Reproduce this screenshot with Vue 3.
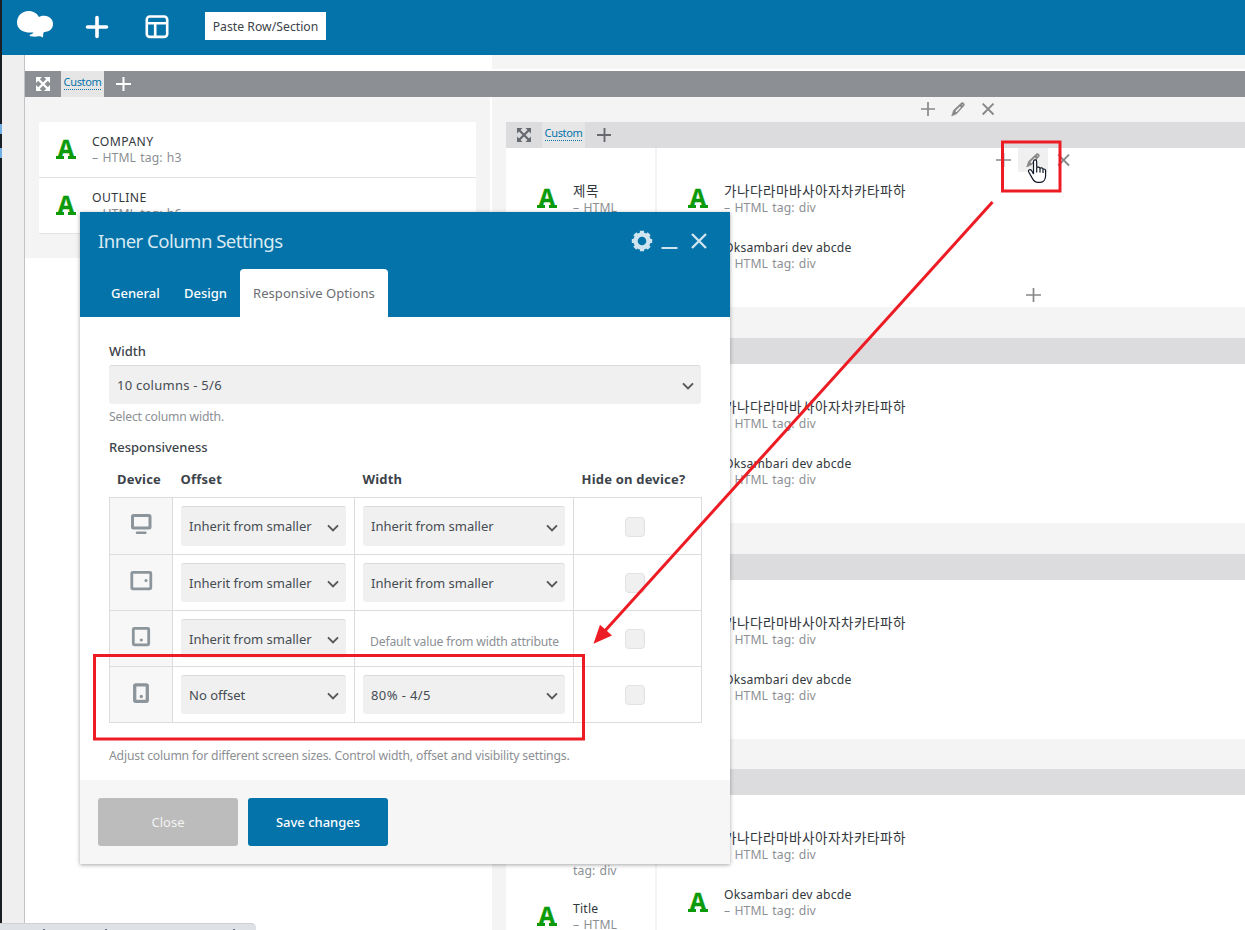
<script setup>
const leftCards = [
  { title: 'COMPANY', tag: '– HTML tag: h3' },
  { title: 'OUTLINE', tag: '– HTML tag: h6' },
]
const hangul = '가나다라마바사아자차카타파하'
const rows = [0, 1, 2, 3]
const wideCards = [
  { title: hangul, tag: '– HTML tag: div', ko: true },
  { title: 'Oksambari dev abcde', tag: '– HTML tag: div' },
]
const narrowCards = [
  { title: '제목', tag: '– HTML tag: div', ko: true },
  { title: 'Title', tag: '– HTML tag: div' },
]
const devices = [
  { id: 'desktop', offset: 'Inherit from smaller', width: 'Inherit from smaller' },
  { id: 'landscape', offset: 'Inherit from smaller', width: 'Inherit from smaller' },
  { id: 'tablet', offset: 'Inherit from smaller', width: null },
  { id: 'phone', offset: 'No offset', width: '80% - 4/5' },
]
</script>

<template>
  <div class="stage">
    <header class="topbar">
      <svg class="logo" width="38" height="30" viewBox="0 0 38 30"><path fill="#fff" d="M12.500 1c5 0 8.500 2.500 10.500 6 1.700-1 3.300-1.300 5.500-1.200 4.800.2 8.500 3.500 8.500 8 0 5-3.500 8.100-8.500 8.300-1 .2-1.400 1.200-1.300 2.900l-.4 2.500c-2-1.200-3.500-1.400-5.700-1-2 .3-4.300 0-6.300-.2-1.500-.2-1.600-1.100-.4-1.700 1.500-.6 2.500-1.400 3.300-2.200C7 23.600 1 19 1 12.500 1 6 6 1 12.500 1z"/></svg>
      <svg class="add" width="24" height="24" viewBox="0 0 24 24"><path d="M12 2.500v19M2.500 12h19" stroke="#fff" stroke-width="3.600" stroke-linecap="round"/></svg>
      <svg class="template" width="24" height="24" viewBox="0 0 24 24"><g fill="none" stroke="#fff" stroke-width="2.600"><rect x="1.800" y="1.500" width="20.400" height="20.400" rx="3"/><path d="M2 8.200h20M10.200 8.500v13"/></g></svg>
      <button class="paste">Paste Row/Section</button>
    </header>

    <div class="workspace">
      <aside class="edge"><i></i><i></i></aside>
      <aside class="rail"></aside>
      <main class="canvas">
        <div class="spacer"><div></div></div>
        <div class="rowbar dark">
          <span class="move"><svg width="16" height="16" viewBox="0 0 16 16"><g fill="currentColor"><path d="M1 1h6L1 7zM15 1v6L9 1zM1 15V9l6 6zM15 15H9l6-6z"/></g><path d="M3 3l10 10M13 3L3 13" stroke="currentColor" stroke-width="2.400"/></svg></span>
          <span class="layout"><b>Custom</b></span>
          <svg class="plus" width="16" height="16" viewBox="0 0 16 16"><path d="M8.500 1v14M1 8h15" stroke="currentColor" stroke-width="2"/></svg>
        </div>
        <div class="columns">
          <section class="left">
            <div class="leftcol">
              <article v-for="c in leftCards" :key="c.title" class="card">
                <span class="letter">A</span>
                <div><h4>{{ c.title }}</h4><p>{{ c.tag }}</p></div>
              </article>
            </div>
          </section>
          <section class="right">
            <div class="tools outer">
              <span><svg width="16" height="16" viewBox="0 0 16 16"><path d="M8 1v14M1 8h14" stroke="#888" stroke-width="1.700"/></svg></span>
              <span><svg width="16" height="16" viewBox="0 0 16 16"><path class="pen" fill-rule="evenodd" d="M1 15l1.800-5.700L10.600 2c1.500-1.300 3.900 1 2.800 2.600L6 12.700zM4.300 10.100l1.500 1.500 4.600-5-1.300-1.300zM11 3.700l1 1 .6-.8-.8-.8z"/></svg></span>
              <span><svg width="16" height="16" viewBox="0 0 16 16"><path d="M2.700 2.700l10.800 10.800M13.500 2.700L2.700 13.500" stroke="#888" stroke-width="1.900"/></svg></span>
            </div>
            <div v-for="r in rows" :key="r" class="inner">
              <div class="rowbar pale">
                <template v-if="r === 0">
                  <span class="move"><svg width="16" height="16" viewBox="0 0 16 16"><g fill="currentColor"><path d="M1 1h5.500L1 6.500zM15 1v5.500L9.500 1zM1 15V9.500L6.500 15zM15 15H9.500L15 9.500z"/></g><path d="M3 3l10 10M13 3L3 13" stroke="currentColor" stroke-width="2.200"/></svg></span>
                  <span class="layout"><b>Custom</b></span>
                  <svg class="plus" width="16" height="16" viewBox="0 0 16 16"><path d="M8.500 1v14M1 8h14" stroke="currentColor" stroke-width="1.900"/></svg>
                </template>
              </div>
              <div class="pair">
                <div class="cell narrow">
                  <article v-for="c in narrowCards" :key="c.title" class="card">
                    <span class="letter">A</span>
                    <div><h4 :class="{ ko: c.ko }">{{ c.title }}</h4><p>{{ c.tag }}</p></div>
                  </article>
                </div>
                <div class="cell wide">
                  <article v-for="c in wideCards" :key="c.title" class="card">
                    <span class="letter">A</span>
                    <div><h4 :class="{ ko: c.ko }">{{ c.title }}</h4><p>{{ c.tag }}</p></div>
                  </article>
                  <template v-if="r === 0">
                    <div class="tools over">
                      <span><svg width="16" height="16" viewBox="0 0 16 16"><path d="M8.500 1v14M1 8h15" stroke="#888" stroke-width="1.700"/></svg></span>
                      <span class="hover"><svg width="16" height="16" viewBox="0 0 16 16"><path class="pen" fill-rule="evenodd" d="M1 15l1.800-5.700L10.600 2c1.500-1.300 3.900 1 2.800 2.600L6 12.700zM4.300 10.100l1.500 1.500 4.600-5-1.300-1.300zM11 3.700l1 1 .6-.8-.8-.8z"/></svg></span>
                      <span><svg width="16" height="16" viewBox="0 0 16 16"><path d="M3.200 2.700L14 13.500M14 2.700L3.200 13.500" stroke="#888" stroke-width="1.900"/></svg></span>
                    </div>
                    <div class="tools under"><span><svg width="16" height="16" viewBox="0 0 16 16"><path d="M8.500 1v14M1 8h15" stroke="#888" stroke-width="1.700"/></svg></span></div>
                  </template>
                </div>
              </div>
            </div>
          </section>
        </div>
      </main>
    </div>

    <div class="status"><i></i><i></i><i></i></div>

    <div class="modal">
      <div class="head">
        <div class="titlebar">
          <h2>Inner Column Settings</h2>
          <svg class="gear" width="22" height="22" viewBox="0 0 22 22"><circle cx="11" cy="11" r="6.500" fill="none" stroke="#d0e4ef" stroke-width="4.400"/><g stroke="#d0e4ef" stroke-width="4.200"><path d="M11 .8v3M11 18.200v3M.8 11h3M18.200 11h3M3.800 3.800l2 2M16.200 16.200l2 2M3.800 18.200l2-2M16.200 5.800l2-2"/></g></svg>
          <svg class="min" width="17" height="22" viewBox="0 0 17 22"><path d="M.5 18h16" stroke="#d0e4ef" stroke-width="2"/></svg>
          <svg class="close" width="18" height="22" viewBox="0 0 18 22"><path d="M2 4l14 14M16 4L2 18" stroke="#d0e4ef" stroke-width="2.400"/></svg>
        </div>
        <nav>
          <span class="tab t1">General</span><span class="tab t2">Design</span><span class="tab active">Responsive Options</span>
        </nav>
      </div>
      <div class="body">
        <label class="lbl">Width</label>
        <div class="select big"><span>10 columns - 5/6</span><svg width="12" height="8" viewBox="0 0 12 8"><path d="M1 1.300l5 5 5-5" fill="none" stroke="#555" stroke-width="1.900"/></svg></div>
        <p class="hint">Select column width.</p>
        <label class="lbl resp">Responsiveness</label>
        <div class="thead"><b>Device</b><b>Offset</b><b>Width</b><b>Hide on device?</b></div>
        <div class="grid">
          <div v-for="d in devices" :key="d.id" class="line" :class="d.id">
            <div class="dev">
              <svg width="24" height="24" viewBox="0 0 24 24">
                <g fill="none" stroke="#8b959b">
                  <template v-if="d.id === 'desktop'"><rect x="3.500" y="4.500" width="17.500" height="12.500" rx="1" stroke-width="3"/><path d="M8 21.700h8.400" stroke-width="2.400" stroke-linecap="round"/></template>
                  <template v-else-if="d.id === 'landscape'"><rect x="2.800" y="4.300" width="19" height="16.500" rx="1" stroke-width="2.800"/><circle cx="17" cy="12.500" r=".8" stroke-width="1.600"/></template>
                  <template v-else-if="d.id === 'tablet'"><rect x="4.300" y="4.300" width="15.400" height="16.500" rx="1" stroke-width="2.800"/><circle cx="12.300" cy="16" r=".8" stroke-width="1.600"/></template>
                  <template v-else><rect x="5.700" y="4.800" width="12.600" height="16.500" rx="1" stroke-width="3.300"/><circle cx="12.300" cy="16.500" r=".9" stroke-width="1.600"/></template>
                </g>
              </svg>
            </div>
            <div class="off"><div class="select"><span>{{ d.offset }}</span><svg width="12" height="8" viewBox="0 0 12 8"><path d="M1 1.300l5 5 5-5" fill="none" stroke="#555" stroke-width="1.900"/></svg></div></div>
            <div class="wid">
              <div v-if="d.width" class="select"><span>{{ d.width }}</span><svg width="12" height="8" viewBox="0 0 12 8"><path d="M1 1.300l5 5 5-5" fill="none" stroke="#555" stroke-width="1.900"/></svg></div>
              <span v-else class="default">Default value from width attribute</span>
            </div>
            <div class="hide"><i class="check"></i></div>
          </div>
        </div>
        <p class="hint foot">Adjust column for different screen sizes. Control width, offset and visibility settings.</p>
      </div>
      <div class="actions"><button class="gray">Close</button><button class="blue">Save changes</button></div>
    </div>

    <svg class="marks" width="1245" height="930" viewBox="0 0 1245 930">
      <path d="M1033.500 174v-12.300c0-2.400 3.200-2.400 3.200 0v6c.5-1 3-.8 3.300.6.700-.8 2.900-.5 3 1 1-.7 2.600-.1 2.600 1.500v4.700c0 3.700-2 6.800-5.400 6.800h-2.200c-2.800 0-4.400-1.600-5.500-3.700l-3.900-6.800c-.8-2 1.700-3.100 3-1.300zM1036.700 168v4.500M1040 168.500v4M1043 169.500v3.500" fill="#fff" stroke="#111827" stroke-width="1.200"/>
      <g fill="none" stroke="#ed1c24" stroke-width="3"><rect x="1002.500" y="142" width="57.500" height="49"/><rect x="94.500" y="655.500" width="489" height="83.500"/><path d="M992.500 202L603 633"/></g>
      <path d="M593.500 643.700l6.500-19 12 10.800z" fill="#ed1c24"/>
    </svg>
  </div>
</template>

<style>
body { margin: 0; background: #fff; }
</style>

<style scoped>
* { box-sizing: border-box; }
.stage { position: relative; width: 1245px; height: 930px; overflow: hidden; background: #fff; font-family: "Noto Sans", "Noto Sans CJK KR", sans-serif; font-size: 13px; color: #3c434a; }
h2, h4, p { margin: 0; font-weight: 400; }
svg { display: block; flex: none; }
button { border: 0; padding: 0; font: inherit; }
.topbar { display: flex; height: 55px; margin-left: 2px; background: #0473aa; }
.logo { margin: 10px 0 0 14px; }
.add { margin: 14.500px 0 0 31px; }
.template { margin: 15px 0 0 36px; }
.paste { width: 121px; height: 28px; margin: 12px 0 0 36px; background: #fff; color: #3c434a; font-size: 12.200px; white-space: nowrap; letter-spacing: .03px; }
.workspace { display: flex; height: 875px; }
.edge { width: 2px; flex: none; margin-top: -55px; background: #1a1f26; padding-top: 124px; }
.edge i { display: block; height: 10px; background: #72aee6; margin-bottom: 14px; }
.rail { width: 23px; flex: none; background: #efefef; border-right: 1px solid #c1c3c5; }
.canvas { flex: 1; min-width: 0; }
.spacer { height: 16px; padding-left: 467px; }
.spacer div { height: 14px; background: #f5f5f5; }
.rowbar { display: flex; height: 26px; align-items: center; }
.dark { background: #8c8f94; color: #fff; }
.pale { background: #dcdcde; color: #666a70; }
.move { width: 36px; padding-left: 10px; }
.layout { width: 43px; height: 26px; background: #e6e6e6; text-align: center; line-height: 15px; padding-top: 3px; }
.layout b { display: inline-block; font-weight: 400; font-size: 11px; line-height: 14px; height: 15px; color: #0473aa; border-bottom: 1px dotted #0473aa; letter-spacing: -.35px; }
.plus { margin-left: 11px; }
.columns { display: flex; height: 833px; }
.left { width: 465px; flex: none; margin-right: 2px; }
.leftcol { height: 161px; background: #f4f4f4; padding: 25px 14px 0; }
.leftcol .card { height: 56px; background: #fff; border-bottom: 1px solid #e3e3e5; }
.right { flex: 1; min-width: 0; background: #f4f4f4; padding-left: 14px; }
.tools { display: flex; height: 24px; }
.tools span { width: 30px; height: 24px; display: flex; align-items: center; justify-content: center; }
.pen { fill: #888; stroke: #888; stroke-width: .6px; transform: translateX(.7px); }
.outer { height: 25px; margin-left: 407px; }
.hover { background: #f0f0f0; }
.inner { height: 216px; }
.pair { display: flex; height: 159px; gap: 2px; }
.inner:last-child { height: 161px; margin-top: -1px; }
.cell { background: #fff; padding-top: 23px; position: relative; }
.narrow { width: 149px; overflow: hidden; }
.wide { flex: 1; }
.over { position: absolute; top: 0; left: 331px; }
.under { position: absolute; top: 135px; left: 361px; }
.card { display: flex; padding: 12px 0 0 17px; }
.letter { position: relative; width: 36px; height: 32px; flex: none; padding-left: 1.600px; color: #0a9a0a; font: 700 28px/34px "Liberation Mono", monospace; -webkit-text-stroke: .4px #0a9a0a; }
.letter::before, .letter::after { content: ""; position: absolute; top: 21.500px; left: 0; width: 8px; height: 3px; background: #0a9a0a; }
.letter::after { left: 12px; }
.card h4 { font-size: 12.200px; line-height: 16px; color: #32373c; letter-spacing: .2px; white-space: nowrap; }
.leftcol .card h4 { letter-spacing: .4px; }
.card h4.ko { font-size: 13.500px; letter-spacing: .58px; }
.card p { font-size: 12.200px; line-height: 16px; color: #8c8f94; letter-spacing: .08px; word-spacing: 1px; }
.cell .card { padding: 12px 30px 0 31px; height: 56px; }
.cell .card:first-child { height: 57px; }
.cell .card:first-child h4 { line-height: 17px; }
.narrow .card:first-child { height: 71px; }
.status { position: absolute; left: 0; top: 923px; width: 256px; height: 7px; background: #dee1e6; border-top: 1px solid #cfd1d4; border-radius: 0 5px 0 0; }
.status i { position: absolute; top: 5px; width: 2px; height: 1px; background: #6a7080; left: 43px; }
.status i:nth-child(2) { left: 105px; }
.status i:nth-child(3) { left: 233px; }

.modal { position: absolute; left: 80px; top: 212px; width: 650px; height: 652px; background: #fff; box-shadow: 0 1px 4px rgba(0,0,0,.35); }
.head { height: 105px; background: #0473aa; }
.titlebar { display: flex; height: 57px; padding-left: 18px; }
.titlebar h2 { font-size: 18.600px; line-height: 57px; width: 533px; color: #d9eaf3; white-space: nowrap; letter-spacing: -.55px; }
.gear { margin-top: 18px; }
.min { margin: 18px 0 0 8px; }
.close { margin: 18px 0 0 12px; }
nav { display: flex; padding-left: 18px; height: 48px; line-height: 48px; color: #fff; }
.tab { padding-left: 13px; white-space: nowrap; font-weight: 500; }
.t1 { width: 73px; }
.t2 { width: 69px; }
.active { width: 148px; background: #fff; color: #6b6f73; border-radius: 4px 4px 0 0; font-weight: 400; letter-spacing: .06px; }
.body { height: 463px; padding: 24px 28px 0 29px; }
.lbl { display: block; height: 24px; line-height: 20px; font-weight: 500; }
.select { height: 39px; display: flex; align-items: center; justify-content: space-between; background: #f0f0f0; border-top: 1px solid #dadadc; border-radius: 3px; padding: 0 7px 0 8px; white-space: nowrap; color: #454c53; }
.select svg { margin-top: 2px; }
.big { width: 592px; letter-spacing: .25px; }
.hint { font-size: 12.200px; line-height: 17px; color: #8c8f94; white-space: nowrap; letter-spacing: -.17px; }
.body > .hint { margin-top: 4px; }
.resp { margin-top: 12px; }
.thead { display: grid; grid-template-columns: 63.500px 182px 219px 128px; height: 36px; line-height: 16px; padding: 10px 0 0 8px; white-space: nowrap; letter-spacing: .2px; }
.grid { border: 1px solid #dcdcde; border-width: 1px 0 0 1px; width: 593px; }
.line { display: grid; grid-template-columns: 63px 182px 219px 128px; grid-template-rows: 100%; height: 56px; }
.line.desktop { height: 57px; }
.line > div { border: 1px solid #dcdcde; border-width: 0 1px 1px 0; }
.line > .dev { background: #f7f7f7; display: flex; justify-content: center; padding-top: 13px; }
.off, .wid { padding: 8px; }
.desktop .select { height: 40px; }
.desktop .select span { margin-top: -2px; }
.default { display: block; font-size: 12.200px; color: #8c8f94; padding-left: 7px; line-height: 45px; height: 39px; white-space: nowrap; letter-spacing: -.18px; }
.phone .wid .select { letter-spacing: .4px; }
.hide { padding: 18px 0 0 51px; }
.desktop .hide { padding-top: 19px; }
.check { display: block; width: 20px; height: 20px; border: 1px solid #e2e2e4; background: #f0f0f0; border-radius: 4px; }
.body > .foot { margin-top: 24px; }
.actions { height: 84px; background: #f6f6f6; padding: 18px; display: flex; gap: 10px; }
.actions button { width: 140px; height: 48px; border-radius: 3px; color: #fff; font-size: 13px; }
.actions .gray { background: #bcbcbc; color: #f3f3f3; }
.blue { background: #0473aa; font-weight: 500; }
.marks { position: absolute; left: 0; top: 0; }
</style>
